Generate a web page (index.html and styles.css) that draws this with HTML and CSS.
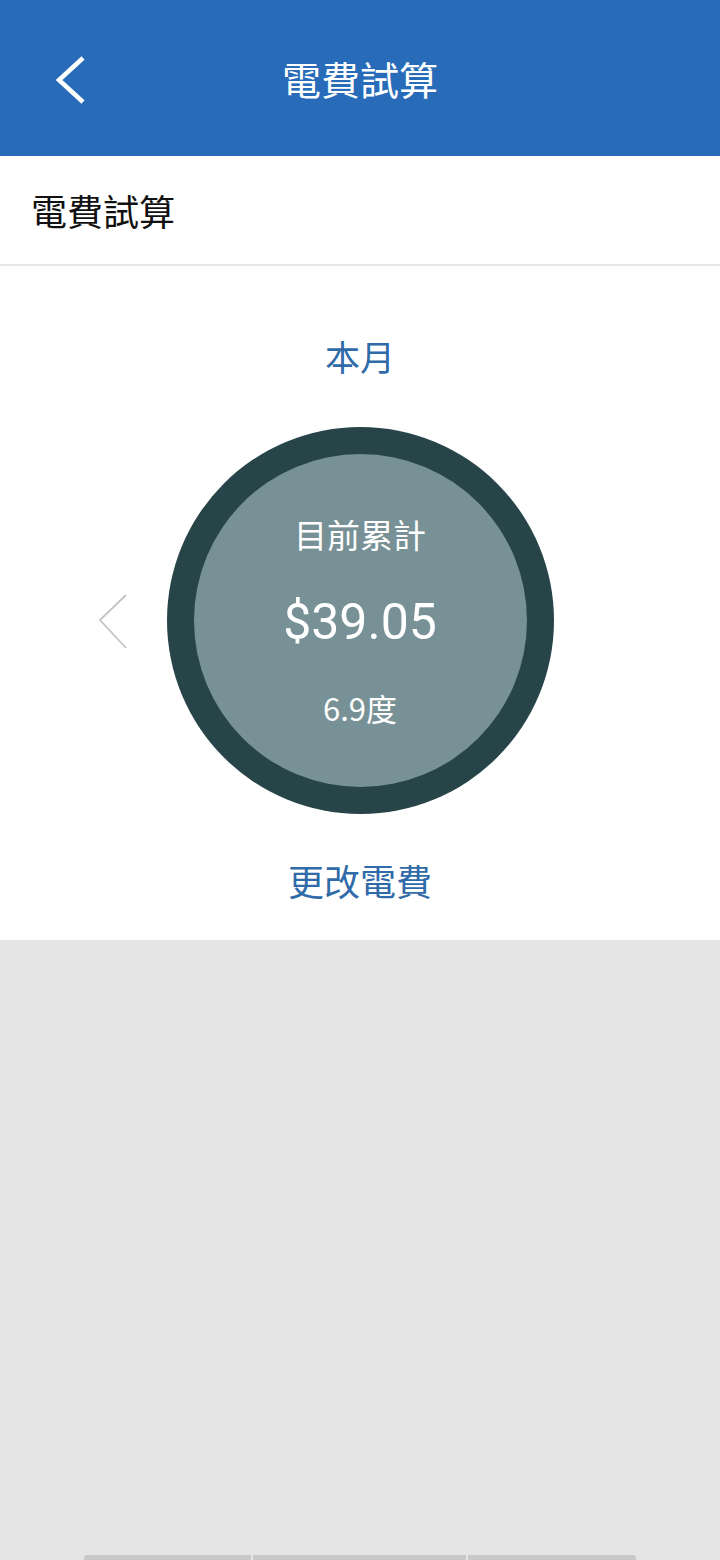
FILE: index.html
```html
<!DOCTYPE html>
<html lang="zh-Hant">
<head>
<meta charset="utf-8">
<title>電費試算</title>
<link rel="stylesheet" href="styles.css">
</head>
<body>
<div class="app">
  <header class="topbar">
    <button class="back" aria-label="返回">
      <svg width="40" height="56" viewBox="0 0 40 56"><polyline points="33,8 9,30 33,52" fill="none" stroke="#fff" stroke-width="4.5" stroke-linecap="butt" stroke-linejoin="miter"/></svg>
    </button>
    <h1 class="topbar-title">電費試算</h1>
  </header>
  <section class="card">
    <div class="card-head">電費試算</div>
    <div class="card-body">
      <div class="period">本月</div>
      <div class="gauge-row">
        <button class="prev" aria-label="上個月">
          <svg width="32" height="60" viewBox="0 0 32 60"><polyline points="29,3 3,28 29,56" fill="none" stroke="#c4c4c4" stroke-width="1.8"/></svg>
        </button>
        <div class="ring">
          <div class="disc">
            <div class="disc-label">目前累計</div>
            <div class="disc-amount">$39.05</div>
            <div class="disc-units">6.9度</div>
          </div>
        </div>
      </div>
      <div class="change">更改電費</div>
    </div>
  </section>
  <div class="rest">
    <div class="tabs">
      <span class="tab t1"></span>
      <span class="tab t2"></span>
      <span class="tab t3"></span>
    </div>
  </div>
</div>
</body>
</html>
```

FILE: styles.css
```css
* { box-sizing: border-box; }
html, body { margin: 0; padding: 0; }
body {
  width: 720px;
  height: 1560px;
  font-family: "Roboto", "Noto Sans CJK TC", sans-serif;
  background: #e5e5e5;
  overflow: hidden;
}
.app { display: flex; flex-direction: column; height: 1560px; }
.topbar {
  height: 156px;
  background: #276bb9;
  display: flex;
  align-items: center;
  justify-content: center;
  position: relative;
  flex: none;
}
.back {
  position: absolute;
  left: 50px;
  top: 50px;
  width: 40px;
  height: 56px;
  padding: 0;
  border: 0;
  background: none;
  display: flex;
}
.topbar-title {
  margin: 0;
  color: #fff;
  font-family: "Noto Sans CJK TC", sans-serif;
  font-weight: 400;
  font-size: 39px;
  line-height: 1;
  letter-spacing: 0;
}
.card { background: #fff; flex: none; }
.card-head {
  height: 110px;
  padding-left: 31px;
  display: flex;
  align-items: center;
  font-family: "Noto Sans CJK TC", sans-serif;
  font-size: 36px;
  color: #111;
  border-bottom: 2px solid #e6e6e6;
}
.card-body {
  height: 674px;
  display: flex;
  flex-direction: column;
  align-items: center;
  padding-top: 67px;
}
.period {
  font-family: "Noto Sans CJK TC", sans-serif;
  font-size: 35px;
  line-height: 46px;
  color: #2f6aa9;
}
.gauge-row {
  margin-top: 48px;
  position: relative;
  width: 720px;
  display: flex;
  justify-content: center;
}
.prev {
  position: absolute;
  left: 97px;
  top: 165px;
  width: 32px;
  height: 60px;
  padding: 0;
  border: 0;
  background: none;
  display: flex;
}
.ring {
  width: 387px;
  height: 387px;
  border-radius: 50%;
  background: #274449;
  padding: 27px;
  display: flex;
}
.disc {
  flex: 1;
  border-radius: 50%;
  background: #789196;
  display: flex;
  flex-direction: column;
  align-items: center;
  color: #fff;
  padding-top: 58px;
}
.disc-label {
  font-family: "Noto Sans CJK TC", sans-serif;
  font-size: 33px;
  line-height: 44px;
}
.disc-amount {
  margin-top: 36px;
  font-size: 50px;
  line-height: 60px;
}
.disc-units {
  margin-top: 35px;
  font-family: "Noto Sans CJK TC", sans-serif;
  font-size: 31px;
  line-height: 42px;
}
.change {
  margin-top: 42px;
  font-family: "Noto Sans CJK TC", sans-serif;
  font-size: 36px;
  line-height: 48px;
  color: #2f6aa9;
}
.rest {
  flex: 1;
  background: #e5e5e5;
  display: flex;
  align-items: flex-end;
  justify-content: center;
}
.tabs { display: flex; gap: 2px; width: 552px; height: 5px; }
.tab { background: #c8c8c8; height: 5px; }
.t1 { width: 167px; border-top-left-radius: 3px; }
.t2 { width: 213px; }
.t3 { width: 168px; border-top-right-radius: 3px; }
```
